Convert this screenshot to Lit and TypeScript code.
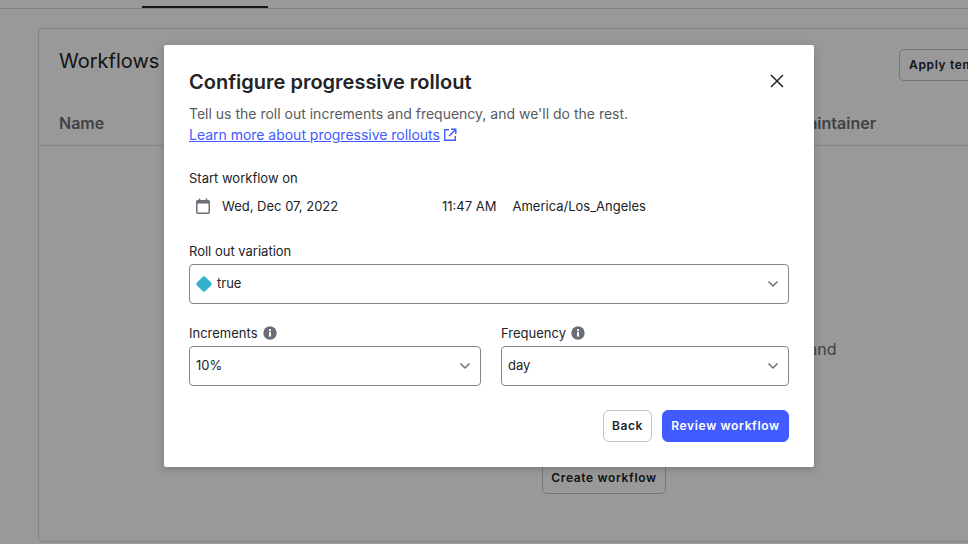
import { LitElement, html, css } from 'lit';
import { customElement } from 'lit/decorators.js';

const chevron = html`<svg class="chevron" width="12" height="8" viewBox="0 0 12 8" fill="none"><path d="M1.5 1.5 6 6l4.5-4.5" stroke="#6b6f76" stroke-width="1.5"/></svg>`;

const info = html`<svg class="info" width="14" height="14" viewBox="0 0 14 14"><circle cx="7" cy="7" r="6.7" fill="#6b6f76"/><rect x="6" y="6" width="2" height="4.6" fill="#fff"/><rect x="6" y="3.2" width="2" height="1.9" fill="#fff"/></svg>`;

@customElement('app-root')
export class AppRoot extends LitElement {
  static styles = css`
    :host {
      display: block;
      position: relative;
      width: 968px;
      height: 544px;
      overflow: hidden;
      background: #fff;
      font-family: Inter, 'Liberation Sans', sans-serif;
      color: #212327;
    }
    .tabs {
      height: 8px;
      border-bottom: 1px solid #dcdcdc;
      padding-left: 142px;
    }
    .tab-active {
      width: 126px;
      height: 6px;
      border-bottom: 2px solid #212327;
    }
    .card {
      box-sizing: border-box;
      width: 1132px;
      height: 514px;
      margin: 19px 0 0 38px;
      border: 1px solid #dcdcdc;
      border-radius: 4px;
    }
    .card-head {
      display: flex;
      align-items: flex-start;
      box-sizing: border-box;
      height: 52px;
      padding: 20px 0 0 20px;
    }
    .card-title {
      width: 100px;
      font-size: 20px;
      line-height: 24px;
      font-weight: 400;
      white-space: nowrap;
    }
    .ghost-btn {
      box-sizing: border-box;
      height: 32px;
      padding: 0 9px;
      border: 1px solid #c4c4c4;
      border-radius: 5px;
      background: #fff;
      font: 600 12px/30px Inter, sans-serif;
      letter-spacing: 0.65px;
      color: #212327;
    }
    .apply {
      margin-left: 740px;
      width: 130px;
      text-align: left;
    }
    .columns {
      display: flex;
      justify-content: space-between;
      box-sizing: border-box;
      height: 44px;
      margin-top: 21px;
      padding: 0 293px 0 20px;
      border-bottom: 1px solid #dcdcdc;
      font-size: 16px;
      line-height: 42px;
      font-weight: 600;
      color: #6b6f76;
    }
    .empty {
      text-align: center;
      padding-top: 191px;
    }
    .empty p {
      width: 465px;
      height: 125px;
      margin: 0 auto;
      text-align: right;
      font-size: 16px;
      line-height: 24px;
      color: #6b6f76;
    }
    .create {
      display: inline-block;
      width: 124px;
      padding: 0;
      text-align: center;
    }
    .overlay {
      position: absolute;
      inset: 0;
      background: rgba(0, 0, 0, 0.4);
    }
    .modal {
      position: absolute;
      left: 164px;
      top: 45px;
      box-sizing: border-box;
      width: 650px;
      height: 422px;
      padding: 25px 25px 0;
      background: #fff;
      border-radius: 2px;
      box-shadow: 0 2px 8px rgba(0, 0, 0, 0.2);
    }
    .modal-head {
      display: flex;
      justify-content: space-between;
      align-items: center;
      height: 24px;
    }
    h2 {
      margin: 0;
      font-size: 20px;
      line-height: 24px;
      font-weight: 600;
      color: #212327;
    }
    .close {
      display: block;
      margin: -2px 5px 0 0;
    }
    .intro {
      margin: 9px 0 0;
      font-size: 14px;
      line-height: 21px;
      color: #585b61;
    }
    .intro a {
      display: inline-flex;
      align-items: center;
      gap: 3px;
      color: #405bff;
    }
    .intro a span {
      text-decoration: underline;
      letter-spacing: -0.02px;
    }
    .label {
      display: flex;
      align-items: center;
      gap: 5px;
      font-size: 13px;
      line-height: 18px;
      color: #212327;
    }
    .start {
      margin-top: 24px;
    }
    .when {
      display: flex;
      align-items: center;
      height: 38px;
      font-size: 13px;
      color: #212327;
      padding-left: 7px;
    }
    .date {
      margin-left: 12px;
      width: 220px;
      margin-bottom: 1px;
    }
    .zone {
      margin-left: 16px;
    }
    .variation {
      margin-top: 17px;
    }
    .select {
      display: flex;
      align-items: center;
      box-sizing: border-box;
      height: 40px;
      margin-top: 4px;
      padding: 0 9px 0 6px;
      border: 1px solid #7f8791;
      border-radius: 4px;
      font-size: 13px;
      color: #212327;
    }
    .select .value {
      flex: 1;
      margin-bottom: 2px;
    }
    .diamond {
      width: 12px;
      height: 12px;
      margin: 0 7px 1px 2px;
      background: #35b1cd;
      border-radius: 2px;
      transform: rotate(45deg);
    }
    .pair {
      display: grid;
      grid-template-columns: 292px 288px;
      column-gap: 20px;
      margin-top: 20px;
    }
    .actions {
      display: flex;
      justify-content: flex-end;
      gap: 10px;
      margin-top: 24px;
    }
    .btn {
      box-sizing: border-box;
      height: 32px;
      padding: 0 8px;
      border: 1px solid #c4c4c4;
      border-radius: 6px;
      background: #fff;
      font: 600 12px/30px Inter, sans-serif;
      letter-spacing: 0.65px;
      color: #212327;
    }
    .back {
      width: 49px;
      padding: 0;
    }
    .primary {
      width: 127px;
      padding: 0;
      background: #405bff;
      border-color: #405bff;
      color: #fff;
    }
  `;

  render() {
    return html`
      <div class="tabs"><div class="tab-active"></div></div>
      <div class="card">
        <div class="card-head">
          <div class="card-title">Workflows</div>
          <button class="ghost-btn apply">Apply template</button>
        </div>
        <div class="columns"><span>Name</span><span>Maintainer</span></div>
        <div class="empty">
          <p>and</p>
          <button class="ghost-btn create">Create workflow</button>
        </div>
      </div>
      <div class="overlay"></div>
      <div class="modal">
        <div class="modal-head">
          <h2>Configure progressive rollout</h2>
          <svg class="close" width="14" height="14" viewBox="0 0 14 14" fill="none"><path d="M1 1l12 12M13 1 1 13" stroke="#212327" stroke-width="1.5"/></svg>
        </div>
        <p class="intro">
          Tell us the roll out increments and frequency, and we'll do the rest.<br />
          <a><span>Learn more about progressive rollouts</span>
            <svg width="14" height="14" viewBox="0 0 14 14" fill="none" stroke="#405bff" stroke-width="1.4"><path d="M6 1.7H1.7v10.6h10.6V8M8 1.2h4.8V6M12.6 1.4 6 8"/></svg>
          </a>
        </p>
        <div class="label start">Start workflow on</div>
        <div class="when">
          <svg width="14" height="16" viewBox="0 0 14 16" fill="none"><path d="M3.5 0.5v3M10.5 0.5v3" stroke="#6b6f76" stroke-width="1.5"/><rect x="0.75" y="2.75" width="12.5" height="12.5" rx="1" stroke="#6b6f76" stroke-width="1.5"/><rect x="0.75" y="2.75" width="12.5" height="2.8" fill="#6b6f76"/></svg>
          <span class="date">Wed, Dec 07, 2022</span>
          <span>11:47 AM</span>
          <span class="zone">America/Los_Angeles</span>
        </div>
        <div class="label variation">Roll out variation</div>
        <div class="select">
          <span class="diamond"></span>
          <span class="value">true</span>
          ${chevron}
        </div>
        <div class="pair">
          <div>
            <div class="label">Increments ${info}</div>
            <div class="select"><span class="value">10%</span>${chevron}</div>
          </div>
          <div>
            <div class="label">Frequency ${info}</div>
            <div class="select"><span class="value">day</span>${chevron}</div>
          </div>
        </div>
        <div class="actions">
          <button class="btn back">Back</button>
          <button class="btn primary">Review workflow</button>
        </div>
      </div>
    `;
  }
}
